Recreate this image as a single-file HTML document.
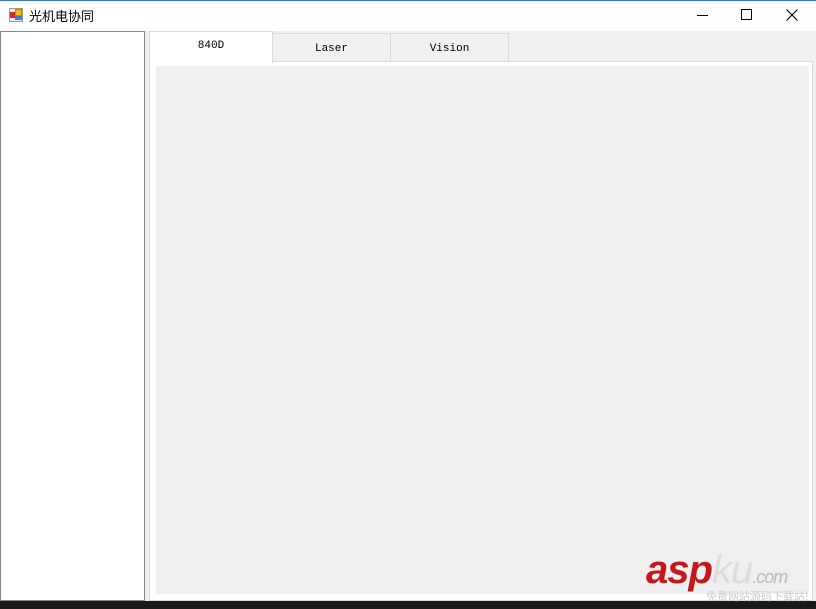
<!DOCTYPE html>
<html><head><meta charset="utf-8"><style>
*{margin:0;padding:0;box-sizing:border-box}
body{width:816px;height:609px;background:#f0f0f0;position:relative;overflow:hidden;font-family:"Liberation Sans","Noto Sans CJK SC",sans-serif}
.a{position:absolute}
.t{font:11px 'Liberation Mono',monospace;text-align:center;color:#000}
</style></head><body>
<div class="a" style="left:0;top:0;width:816px;height:31px;background:#fff;border-top:1px solid #1883d7"></div>
<div class="a" style="left:9px;top:8px;width:14px;height:14px">
 <div class="a" style="left:0;top:0;width:14px;height:14px;border:1px solid #999;background:#eee"></div>
 <div class="a" style="left:1px;top:4px;width:5px;height:6px;background:#d22"></div>
 <div class="a" style="left:6px;top:1px;width:7px;height:7px;background:#f0c020;border:1px solid #b80"></div>
 <div class="a" style="left:6px;top:8px;width:7px;height:4px;background:#3a7bd5"></div>
</div>
<div class="a" style="left:29px;top:6px;font-size:13px;color:#000">光机电协同</div>
<div class="a" style="left:697px;top:15px;width:11px;height:1px;background:#000"></div>
<div class="a" style="left:741px;top:9px;width:11px;height:11px;border:1px solid #000"></div>
<svg class="a" style="left:786px;top:9px" width="12" height="12"><path d="M0.5 0.5L11.5 11.5M11.5 0.5L0.5 11.5" stroke="#000" stroke-width="1.1"/></svg>
<div class="a" style="left:0;top:31px;width:145px;height:570px;background:#fff;border:1px solid #828790"></div>
<div class="a" style="left:149px;top:61px;width:664px;height:540px;background:#fff;border:1px solid #d9d9d9"></div>
<div class="a" style="left:156px;top:66px;width:653px;height:528px;background:#efefef"></div>
<div class="a" style="left:272px;top:33px;width:119px;height:29px;background:#f0f0f0;border:1px solid #d9d9d9"></div>
<div class="a" style="left:390px;top:33px;width:119px;height:29px;background:#f0f0f0;border:1px solid #d9d9d9"></div>
<div class="a" style="left:149px;top:31px;width:124px;height:32px;background:#fff;border:1px solid #d9d9d9;border-bottom:none"></div>
<div class="a t" style="left:149px;top:40px;width:124px">840D</div>
<div class="a t" style="left:272px;top:43px;width:119px">Laser</div>
<div class="a t" style="left:390px;top:43px;width:119px">Vision</div>
<div class="a" style="left:0;top:601px;width:816px;height:8px;background:#1a1a1a"></div>
<div class="a" style="left:646px;top:548px;font:italic bold 40px 'Liberation Sans',sans-serif;color:#c8161d;letter-spacing:-1px">asp<span style="color:#ddd;font-weight:normal">ku</span><span style="font-size:18px;color:#bbb;font-weight:normal">.com</span></div>
<div class="a" style="left:706px;top:588px;font-size:11px;color:#ccc;font-family:'Noto Sans CJK SC',sans-serif">免费网站源码下载站!</div>
</body></html>
